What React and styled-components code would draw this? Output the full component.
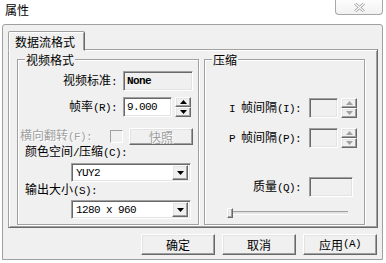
import React from 'react'
import styled, { createGlobalStyle, css } from 'styled-components'

const GlobalStyle = createGlobalStyle`
    html, body {
        margin: 0;
        background: #fff;
    }
    body {
        font-family: "Noto Sans CJK SC", "Liberation Sans", sans-serif;
        font-size: 12px;
        color: #000;
    }
`

const raised = css`
    border: 1px solid;
    border-color: #fff #696969 #696969 #fff;
    box-shadow: inset -1px -1px 0 #a0a0a0, inset 1px 1px 0 #e3e3e3;
    background: #f0f0f0;
    box-sizing: border-box;
`

const sunken = css`
    border: 1px solid;
    border-color: #a0a0a0 #fff #fff #a0a0a0;
    box-shadow: inset 1px 1px 0 #696969, inset -1px -1px 0 #e3e3e3;
    box-sizing: border-box;
`

function Arrow({ down, disabled }) {
    const fill = disabled ? '#a0a0a0' : '#000'
    return (
        <svg width="7" height="4" viewBox="0 0 7 4">
            {down
                ? <polygon points="0,0 7,0 3.5,4" fill={fill} />
                : <polygon points="0,4 7,4 3.5,0" fill={fill} />}
        </svg>
    )
}

function Spinner({ disabled }) {
    return (
        <SpinBox>
            <SpinHalf><Arrow disabled={disabled} /></SpinHalf>
            <SpinHalf><Arrow down disabled={disabled} /></SpinHalf>
        </SpinBox>
    )
}

function Combo({ value }) {
    return (
        <ComboBox>
            <MonoText>{value}</MonoText>
            <DropButton><Arrow down /></DropButton>
        </ComboBox>
    )
}

function App() {
    return (
        <Window>
            <GlobalStyle />
            <TitleBar>
                <Title>属性</Title>
                <CloseButton>
                    <svg width="11" height="9" viewBox="0 0 11 9">
                        <path d="M1 0.5 L10 8.5 M10 0.5 L1 8.5" stroke="#9a9a9a" strokeWidth="2.6" fill="none" />
                        <path d="M1 0.5 L10 8.5 M10 0.5 L1 8.5" stroke="#fff" strokeWidth="1.1" fill="none" />
                    </svg>
                </CloseButton>
            </TitleBar>
            <Frame>
                <TabStrip>
                    <Tab>数据流格式</Tab>
                </TabStrip>
                <TabPanel>
                    <Group width={182}>
                        <Legend>视频格式</Legend>
                        <FieldRow top={5} labelWidth={99} gap={6}>
                            <Label>视频标准<Half>:</Half></Label>
                            <Edit width={70} readOnly><MonoText bold>None</MonoText></Edit>
                        </FieldRow>
                        <FieldRow top={6} labelWidth={99} gap={6}>
                            <Label>帧率<Half>(R):</Half></Label>
                            <EditWithSpin>
                                <Edit width={49}><MonoText>9.000</MonoText></Edit>
                                <Spinner />
                            </EditWithSpin>
                        </FieldRow>
                        <FlipRow>
                            <DisabledText>横向翻转<Half>(F):</Half></DisabledText>
                            <CheckBox />
                            <SmallButton disabled>快照</SmallButton>
                        </FlipRow>
                        <PlainLabel top={1}>颜色空间<Half>/</Half>压缩<Half>(C):</Half></PlainLabel>
                        <ComboRow top={6}><Combo value="YUY2" /></ComboRow>
                        <PlainLabel top={1}>输出大小<Half>(S):</Half></PlainLabel>
                        <ComboRow top={5}><Combo value="1280 x 960" /></ComboRow>
                    </Group>
                    <Group width={161}>
                        <Legend>压缩</Legend>
                        <FieldRow top={32} labelWidth={96} gap={8}>
                            <Label><Half>I </Half>帧间隔<Half>(I):</Half></Label>
                            <EditWithSpin>
                                <Edit width={29} readOnly />
                                <Spinner disabled />
                            </EditWithSpin>
                        </FieldRow>
                        <FieldRow top={10} labelWidth={96} gap={8}>
                            <Label><Half>P </Half>帧间隔<Half>(P):</Half></Label>
                            <EditWithSpin>
                                <Edit width={29} readOnly />
                                <Spinner disabled />
                            </EditWithSpin>
                        </FieldRow>
                        <FieldRow top={29} labelWidth={96} gap={8}>
                            <Label>质量<Half>(Q):</Half></Label>
                            <Edit width={44} readOnly />
                        </FieldRow>
                        <Slider>
                            <Thumb />
                        </Slider>
                    </Group>
                </TabPanel>
                <ButtonRow>
                    <DialogButton>确定</DialogButton>
                    <DialogButton>取消</DialogButton>
                    <DialogButton>应用<Half>(A)</Half></DialogButton>
                </ButtonRow>
            </Frame>
        </Window>
    )
}

export default App

const Window = styled.div`
    width: 386px;
    height: 263px;
    display: flex;
    flex-direction: column;
    overflow: hidden;
`
const TitleBar = styled.div`
    height: 24px;
    display: flex;
    justify-content: space-between;
    align-items: flex-start;
`
const Title = styled.div`
    padding: 3px 0 0 5px;
    font-size: 12px;
    line-height: 14px;
`
const CloseButton = styled.div`
    width: 48px;
    height: 15px;
    margin-right: 3px;
    box-sizing: border-box;
    border: 1px solid #a8a8a8;
    border-top: none;
    border-radius: 0 0 4px 4px;
    background: linear-gradient(#fdfdfd, #f1f1f1);
    display: flex;
    align-items: center;
    justify-content: center;
`
const Frame = styled.div`
    height: 236px;
    margin: 0 3px 0 2px;
    box-sizing: border-box;
    border: 1px solid #a0a0a0;
    border-radius: 3px 3px 0 0;
    background: #f0f0f0;
    padding: 6px 4px 4px 5px;
    display: flex;
    flex-direction: column;
`
const TabStrip = styled.div`
    display: flex;
    height: 19px;
    position: relative;
    z-index: 1;
    margin-bottom: -1px;
`
const Tab = styled.div`
    width: 77px;
    height: 20px;
    box-sizing: border-box;
    border: 1px solid;
    border-color: #a0a0a0 #696969 transparent #a0a0a0;
    border-radius: 2px 2px 0 0;
    box-shadow: inset 1px 1px 0 #fff, inset -1px 0 0 #a0a0a0;
    background: #f0f0f0;
    padding: 3px 0 0 6px;
    line-height: 13px;
`
const TabPanel = styled.div`
    width: 370px;
    height: 179px;
    box-sizing: border-box;
    border: 1px solid;
    border-color: #a0a0a0 #696969 #696969 #a0a0a0;
    box-shadow: inset 1px 1px 0 #fff, inset -1px -1px 0 #a0a0a0;
    display: flex;
    gap: 5px;
    padding: 9px 0 0 8px;
`
const Group = styled.div`
    width: ${p => p.width}px;
    height: 166px;
    box-sizing: border-box;
    border: 1px solid #a0a0a0;
    box-shadow: inset 1px 1px 0 #fff, 1px 1px 0 #fff;
    display: flex;
    flex-direction: column;
`
const Legend = styled.div`
    align-self: flex-start;
    margin: -7px 0 0 7px;
    padding: 0 1px;
    background: #f0f0f0;
    line-height: 13px;
`
const Half = styled.span`
    font-family: "Liberation Mono", monospace;
    font-size: 11px;
    letter-spacing: -0.6px;
    white-space: pre;
`
const FieldRow = styled.div`
    display: grid;
    grid-template-columns: ${p => p.labelWidth}px auto;
    column-gap: ${p => p.gap}px;
    align-items: center;
    margin-top: ${p => p.top}px;
    height: 20px;
`
const Label = styled.div`
    text-align: right;
    white-space: nowrap;
    line-height: 13px;
`
const Edit = styled.div`
    ${sunken};
    width: ${p => p.width}px;
    height: 20px;
    background: ${p => (p.readOnly ? '#f0f0f0' : '#fff')};
    display: flex;
    align-items: center;
    padding-left: 3px;
`
const MonoText = styled.span`
    font-family: "Liberation Mono", monospace;
    font-size: 11px;
    font-weight: ${p => (p.bold ? 700 : 400)};
    letter-spacing: -0.6px;
    white-space: pre;
    line-height: 12px;
`
const EditWithSpin = styled.div`
    display: flex;
    gap: 3px;
    align-items: center;
`
const SpinBox = styled.div`
    width: 16px;
    height: 20px;
    display: flex;
    flex-direction: column;
`
const SpinHalf = styled.div`
    ${raised};
    flex: 1;
    display: flex;
    align-items: center;
    justify-content: center;
`
const FlipRow = styled.div`
    display: flex;
    align-items: center;
    height: 16px;
    margin-top: 11px;
    padding-left: 2px;
`
const DisabledText = styled.span`
    width: 90px;
    flex: none;
    color: #a0a0a0;
    text-shadow: 1px 1px 0 #fff;
    line-height: 13px;
    white-space: nowrap;
`
const CheckBox = styled.div`
    width: 13px;
    height: 13px;
    flex: none;
    box-sizing: border-box;
    border: 1px solid;
    border-color: #a0a0a0 #fff #fff #a0a0a0;
    background: #f0f0f0;
`
const SmallButton = styled.div`
    ${raised};
    width: 64px;
    height: 17px;
    margin-left: 6px;
    flex: none;
    display: flex;
    align-items: center;
    justify-content: center;
    color: ${p => (p.disabled ? '#a0a0a0' : '#000')};
    text-shadow: ${p => (p.disabled ? '1px 1px 0 #fff' : 'none')};
    line-height: 13px;
`
const PlainLabel = styled.div`
    margin: ${p => p.top}px 0 0 7px;
    line-height: 12px;
    height: 12px;
    white-space: nowrap;
`
const ComboRow = styled.div`
    margin: ${p => p.top}px 0 0 53px;
`
const ComboBox = styled.div`
    ${sunken};
    width: 120px;
    height: 19px;
    background: #fff;
    display: flex;
    align-items: center;
    padding: 0 2px 0 4px;
    justify-content: space-between;
`
const DropButton = styled.div`
    ${raised};
    width: 16px;
    height: 15px;
    display: flex;
    align-items: center;
    justify-content: center;
`
const Slider = styled.div`
    margin: 14px 0 0 22px;
    width: 121px;
    height: 2px;
    border-top: 1px solid #a0a0a0;
    border-bottom: 1px solid #fff;
    background: #e3e3e3;
    display: flex;
    align-items: center;
`
const Thumb = styled.div`
    ${raised};
    width: 6px;
    height: 10px;
    flex: none;
`
const ButtonRow = styled.div`
    margin-top: auto;
    display: flex;
    justify-content: flex-end;
    gap: 7px;
    padding-right: 1px;
`
const DialogButton = styled.div`
    ${raised};
    width: 74px;
    height: 21px;
    display: flex;
    align-items: center;
    justify-content: center;
    line-height: 13px;
`
